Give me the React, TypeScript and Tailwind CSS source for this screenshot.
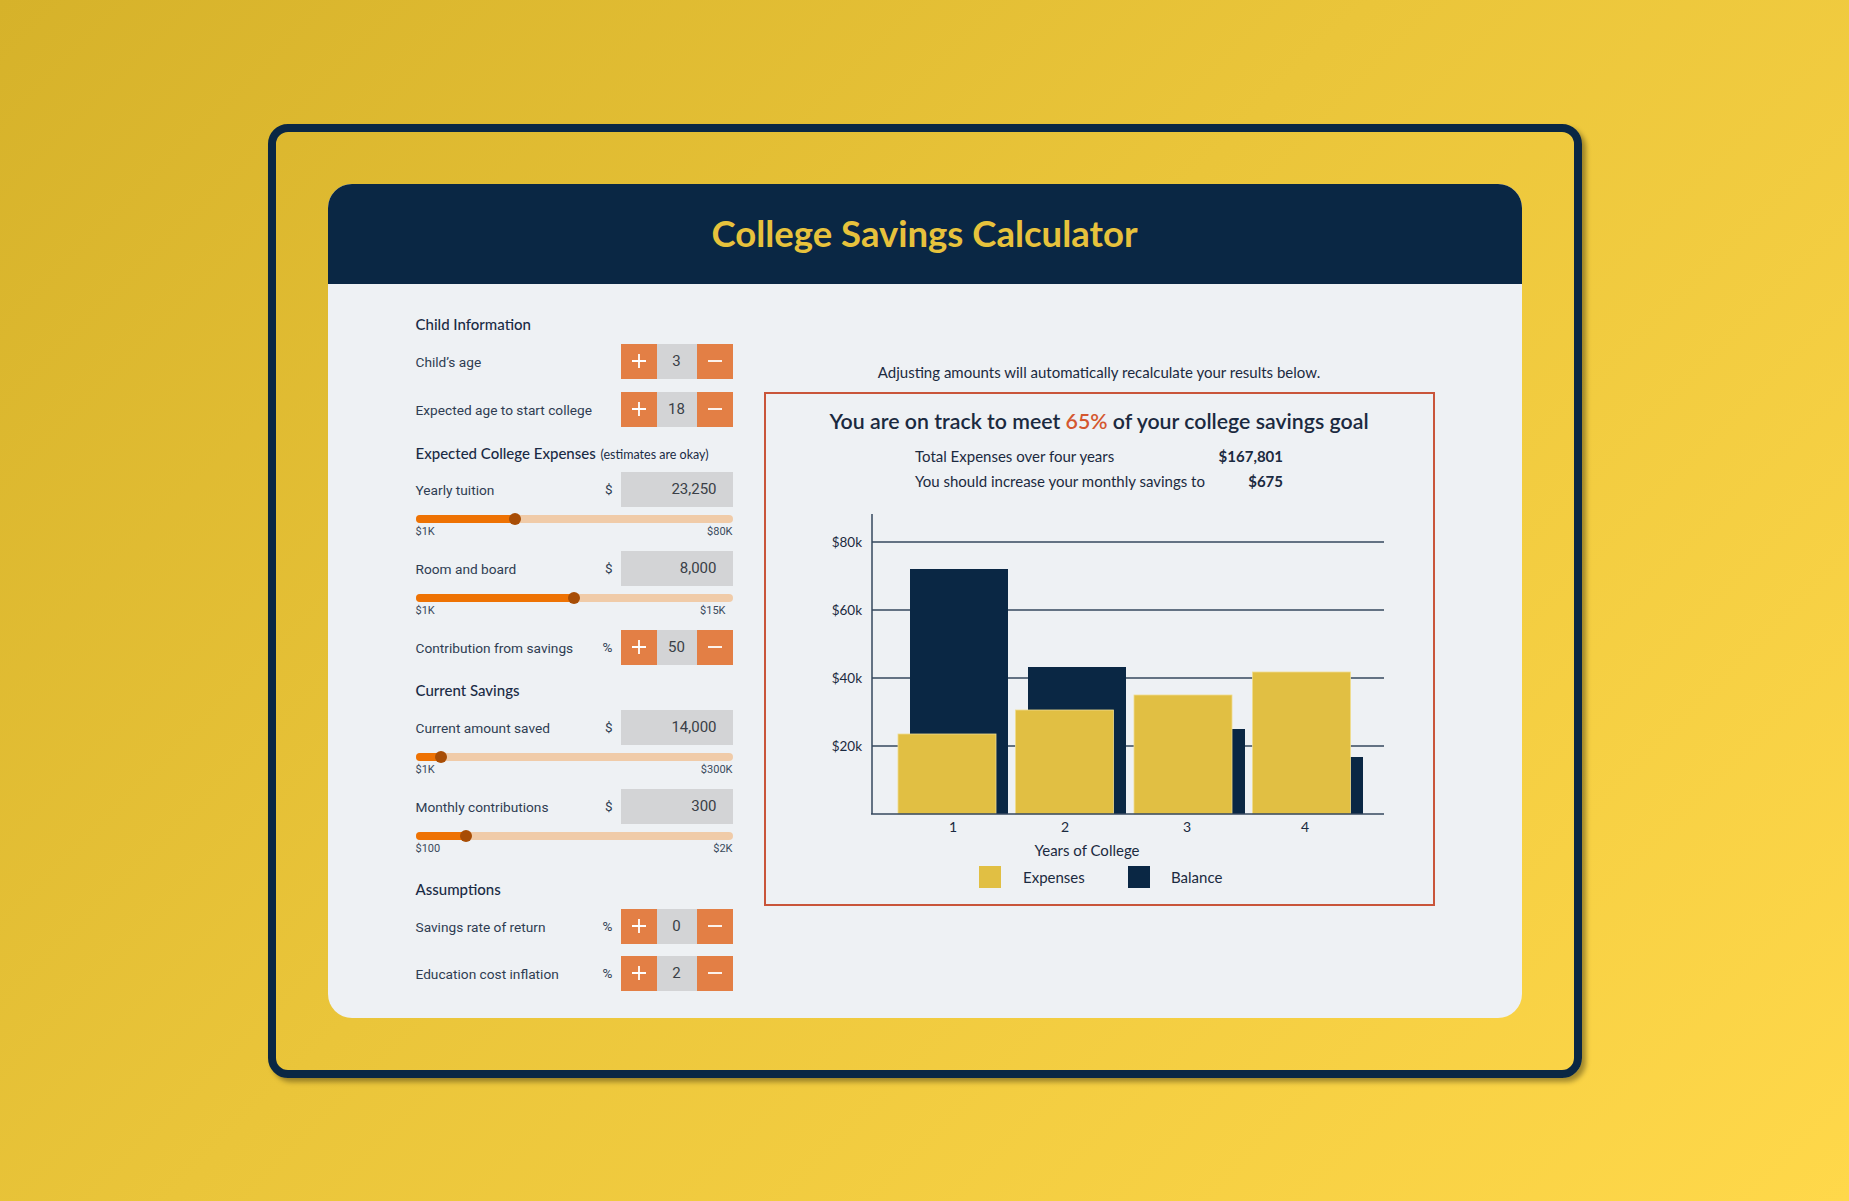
import React from "react";

const LATO = { fontFamily: "Lato, 'Noto Sans', sans-serif" };
const ROBOTO = { fontFamily: "Roboto, 'Liberation Sans', sans-serif" };

function Plus() {
  return (
    <svg width="14" height="14" viewBox="0 0 14 14">
      <path d="M7 0v14M0 7h14" stroke="white" strokeWidth="1.8" />
    </svg>
  );
}
function Minus() {
  return (
    <svg width="14" height="14" viewBox="0 0 14 14">
      <path d="M0 7h14" stroke="white" strokeWidth="1.8" />
    </svg>
  );
}

function Stepper({ value }: { value: string }) {
  return (
    <div className="flex h-[35px]">
      <div className="w-[36px] bg-[#E37F45] flex items-center justify-center">
        <Plus />
      </div>
      <div className="w-[40px] bg-[#D3D4D6] flex items-center justify-center text-[15px] text-[#3A3F47]" style={ROBOTO}>
        {value}
      </div>
      <div className="w-[36px] bg-[#E37F45] flex items-center justify-center">
        <Minus />
      </div>
    </div>
  );
}

function InputBox({ value }: { value: string }) {
  return (
    <div className="w-[112px] h-[35px] bg-[#D3D4D6] flex items-center justify-end pr-[16px] text-[15px] text-[#3A3F47]" style={ROBOTO}>
      {value}
    </div>
  );
}

function Row({ label, unit, children, className = "" }: { label: string; unit?: string; children: React.ReactNode; className?: string }) {
  return (
    <div className={"flex items-center h-[35px] " + className}>
      <span className="flex-1 text-[13.7px] text-[#2F3D52] pt-[2px]" style={ROBOTO}>
        {label}
      </span>
      {unit && (
        <span className="mr-[8px] text-[13.5px] text-[#2F3D52]" style={ROBOTO}>
          {unit}
        </span>
      )}
      {children}
    </div>
  );
}

function Heading({ children, className = "" }: { children: React.ReactNode; className?: string }) {
  return (
    <div className={"h-[18px] leading-[18px] text-[15px] font-medium text-[#1A2B45] whitespace-nowrap " + className} style={LATO}>
      {children}
    </div>
  );
}

function Slider({ pct, min, max, maxClass = "" }: { pct: number; min: string; max: string; maxClass?: string }) {
  return (
    <div className="mt-[6px]">
      <div className="h-[12px] flex items-center">
        <div className="relative w-full h-[8px] rounded-full bg-[#F0CBA8]">
          <div className="absolute left-0 top-0 h-[8px] rounded-full bg-[#EE7203]" style={{ width: `${pct}%` }} />
          <div
            className="absolute top-1/2 w-[12px] h-[12px] rounded-full bg-[#A84D05] -translate-x-1/2 -translate-y-1/2"
            style={{ left: `${pct}%` }}
          />
        </div>
      </div>
      <div className="flex justify-between h-[14px] leading-[14px] text-[11px] text-[#3A4A5C]" style={ROBOTO}>
        <span>{min}</span>
        <span className={maxClass}>{max}</span>
      </div>
    </div>
  );
}

const OX = 766;
const OY = 494;

function Chart() {
  const base = 814;
  const grid = [
    { y: 746, l: "$20k" },
    { y: 678, l: "$40k" },
    { y: 610, l: "$60k" },
    { y: 542, l: "$80k" },
  ];
  const groups = [
    { ex: 898, et: 734, bx: 910, bt: 569 },
    { ex: 1015.5, et: 710, bx: 1028, bt: 667 },
    { ex: 1134, et: 695, bx: 1147, bt: 729 },
    { ex: 1252.5, et: 672, bx: 1265, bt: 757 },
  ];
  const w = 98;
  const labels = [
    { x: 953, t: "1" },
    { x: 1065, t: "2" },
    { x: 1187, t: "3" },
    { x: 1305, t: "4" },
  ];
  return (
    <svg width="667" height="409" viewBox="0 0 667 409" style={LATO}>
      {grid.map((g) => (
        <g key={g.l}>
          <line x1={872 - OX} x2={1384 - OX} y1={g.y - OY} y2={g.y - OY} stroke="#34475E" strokeWidth="1.5" />
          <text x={862 - OX} y={g.y - OY} textAnchor="end" dominantBaseline="central" fontSize="13.5" fill="#1B2A40">
            {g.l}
          </text>
        </g>
      ))}
      {groups.map((g, i) => (
        <g key={i}>
          <rect x={g.bx - OX} y={g.bt - OY} width={w} height={base - g.bt} fill="#0A2744" />
          <rect x={g.ex - OX} y={g.et - OY} width={w} height={base - g.et} fill="#E1BF43" stroke="#EFDC8E" strokeWidth="0.8" />
        </g>
      ))}
      <line x1={872 - OX} x2={872 - OX} y1={514 - OY} y2={base - OY} stroke="#34475E" strokeWidth="1.5" />
      <line x1={871 - OX} x2={1384 - OX} y1={base - OY} y2={base - OY} stroke="#34475E" strokeWidth="1.5" />
      {labels.map((l) => (
        <text key={l.t} x={l.x - OX} y={826 - OY} textAnchor="middle" dominantBaseline="central" fontSize="14" fill="#1B2A40">
          {l.t}
        </text>
      ))}
      <text x={1087 - OX} y={850 - OY} textAnchor="middle" dominantBaseline="central" fontSize="15" fill="#1B2A40">
        Years of College
      </text>
      <rect x={979 - OX} y={866 - OY} width="22" height="22" fill="#E1BF43" />
      <text x={1023 - OX} y={877 - OY} dominantBaseline="central" fontSize="15" fill="#1B2A40">
        Expenses
      </text>
      <rect x={1128 - OX} y={866 - OY} width="22" height="22" fill="#0A2744" />
      <text x={1171 - OX} y={877 - OY} dominantBaseline="central" fontSize="15" fill="#1B2A40">
        Balance
      </text>
    </svg>
  );
}

export default function App() {
  return (
    <div className="w-[1849px] h-[1201px] flex items-center justify-center bg-[linear-gradient(135deg,#D6B22A_0%,#EAC53A_45%,#FFD84A_100%)]">
      <div className="w-[1314px] h-[954px] border-[8px] border-[#0A2744] rounded-[20px] shadow-[4px_4px_5px_rgba(0,0,0,0.35)] p-[52px]">
        <div className="w-full h-full rounded-[24px] bg-[#EEF1F4] overflow-hidden flex flex-col">
          <div className="h-[100px] shrink-0 bg-[#0A2744] flex items-center justify-center">
            <h1 className="text-[36.5px] font-bold text-[#E7C23C] leading-none" style={LATO}>
              College Savings Calculator
            </h1>
          </div>
          <div className="flex px-[88px] pt-[31px]">
            {/* Left column */}
            <div className="w-[317px] shrink-0 flex flex-col">
              <Heading>Child Information</Heading>
              <Row label="Child’s age" className="mt-[11px]">
                <Stepper value="3" />
              </Row>
              <Row label="Expected age to start college" className="mt-[13px]">
                <Stepper value="18" />
              </Row>
              <Heading className="mt-[17px]">
                Expected College Expenses <span className="text-[12.5px] font-normal ml-[1px]">(estimates are okay)</span>
              </Heading>
              <Row label="Yearly tuition" unit="$" className="mt-[10px]">
                <InputBox value="23,250" />
              </Row>
              <Slider pct={31.3} min="$1K" max="$80K" />
              <Row label="Room and board" unit="$" className="mt-[12px]">
                <InputBox value="8,000" />
              </Row>
              <Slider pct={50} min="$1K" max="$15K" maxClass="pr-[7px]" />
              <Row label="Contribution from savings" unit="%" className="mt-[12px]">
                <Stepper value="50" />
              </Row>
              <Heading className="mt-[16px]">Current Savings</Heading>
              <Row label="Current amount saved" unit="$" className="mt-[11px]">
                <InputBox value="14,000" />
              </Row>
              <Slider pct={7.9} min="$1K" max="$300K" />
              <Row label="Monthly contributions" unit="$" className="mt-[12px]">
                <InputBox value="300" />
              </Row>
              <Slider pct={15.8} min="$100" max="$2K" />
              <Heading className="mt-[24px]">Assumptions</Heading>
              <Row label="Savings rate of return" unit="%" className="mt-[11px]">
                <Stepper value="0" />
              </Row>
              <Row label="Education cost inflation" unit="%" className="mt-[12px]">
                <Stepper value="2" />
              </Row>
            </div>
            {/* Right column */}
            <div className="ml-[31px] w-[671px] shrink-0 flex flex-col">
              <p className="mt-[47px] h-[20px] leading-[20px] text-center text-[15px] text-[#1B2A40]" style={LATO}>
                Adjusting amounts will automatically recalculate your results below.
              </p>
              <div className="mt-[10px] w-[671px] h-[514px] border-2 border-[#C9553A] flex flex-col pt-[13px]" style={LATO}>
                <h2 className="h-[28px] leading-[28px] text-center text-[21.3px] font-semibold text-[#1B2A40]">
                  You are on track to meet <span className="text-[#D4572F]">65%</span> of your college savings goal
                </h2>
                <div className="w-[368px] mx-auto mt-[9px] text-[15px] text-[#1B2A40]">
                  <div className="flex justify-between h-[25px] items-center">
                    <span>Total Expenses over four years</span>
                    <span className="font-bold">$167,801</span>
                  </div>
                  <div className="flex justify-between h-[25px] items-center">
                    <span>You should increase your monthly savings to</span>
                    <span className="font-bold">$675</span>
                  </div>
                </div>
                <Chart />
              </div>
            </div>
          </div>
        </div>
      </div>
    </div>
  );
}
